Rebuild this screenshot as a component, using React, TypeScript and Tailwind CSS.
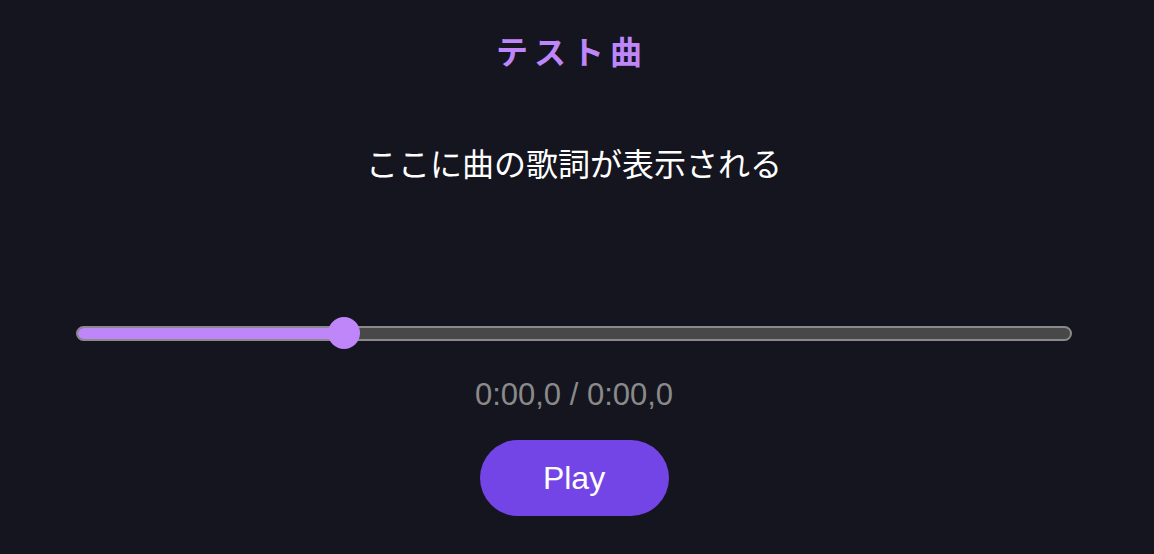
export default function App() {
  const progress = 26.9

  return (
    <div
      className="
        w-full
        h-[554px]
        pr-[6px]
        bg-[#15151f]
        flex
        flex-col
        items-center
        font-['Liberation_Sans','Noto_Sans_CJK_JP',sans-serif]
      "
    >
      <h1
        className="
          mt-[33px]
          mr-[4px]
          text-[32px]
          leading-[40px]
          font-bold
          tracking-[6px]
          text-[#bf86f9]
        "
      >
        テスト曲
      </h1>

      <p
        className="
          mt-[70px]
          text-[32px]
          leading-[44px]
          text-white
        "
      >
        ここに曲の歌詞が表示される
      </p>

      <div
        className="
          mt-[130px]
          w-[996px]
          h-[32px]
          flex
          items-center
          relative
        "
      >
        <div
          className="
            w-full
            h-[15px]
            rounded-full
            border-2
            border-[#8a8a8a]
            bg-[#484848]
            overflow-hidden
          "
        >
          <div
            className="h-full bg-[#bf86f9]"
            style={{ width: `${progress}%` }}
          />
        </div>

        <div
          className="
            absolute
            top-0
            w-[32px]
            h-[32px]
            rounded-full
            bg-[#bf86f9]
            -translate-x-1/2
          "
          style={{ left: `${progress}%` }}
        />
      </div>

      <p
        className="
          mt-[27px]
          text-[31px]
          leading-[38px]
          text-[#8a8a8a]
        "
      >
        0:00,0 / 0:00,0
      </p>

      <button
        className="
          mt-[26px]
          w-[189px]
          h-[76px]
          rounded-full
          bg-[#7445e6]
          text-white
          text-[32px]
        "
      >
        Play
      </button>
    </div>
  )
}
